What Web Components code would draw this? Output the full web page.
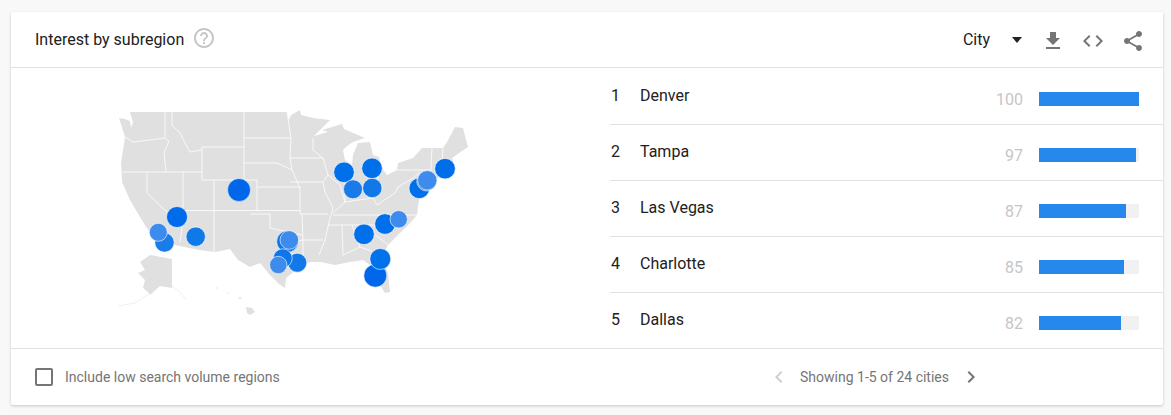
<!DOCTYPE html>
<html>
<head>
<meta charset="utf-8">
<title>Interest by subregion</title>
<style>
    html, body { margin: 0; height: 100%; background: #f8f8f8; overflow: hidden; }
    body { font-family: Roboto, "Liberation Sans", sans-serif; padding: 12px 8px 0 11px; box-sizing: border-box; }
</style>
</head>
<body>
<trends-card>
    <card-header slot="header" heading="Interest by subregion" resolution="City"></card-header>
    <geo-map slot="map"></geo-map>
    <rank-row slot="rows" rank="1" name="Denver" value="100"></rank-row>
    <rank-row slot="rows" rank="2" name="Tampa" value="97"></rank-row>
    <rank-row slot="rows" rank="3" name="Las Vegas" value="87"></rank-row>
    <rank-row slot="rows" rank="4" name="Charlotte" value="85"></rank-row>
    <rank-row slot="rows" rank="5" name="Dallas" value="82" last></rank-row>
    <card-footer slot="footer" label="Include low search volume regions" pages="Showing 1-5 of 24 cities"></card-footer>
</trends-card>

<script>
const ICONS = {
    help: "M11 18h2v-2h-2v2zm1-16C6.48 2 2 6.48 2 12s4.48 10 10 10 10-4.48 10-10S17.52 2 12 2zm0 18c-4.41 0-8-3.59-8-8s3.59-8 8-8 8 3.59 8 8-3.59 8-8 8zm0-14c-2.21 0-4 1.79-4 4h2c0-1.1.9-2 2-2s2 .9 2 2c0 2-3 1.75-3 5h2c0-2.25 3-2.5 3-5 0-2.21-1.79-4-4-4z",
    download: "M19 9h-4V3H9v6H5l7 7 7-7zM5 18v2h14v-2H5z",
    code: "M9.4 16.6L4.8 12l4.6-4.6L8 6l-6 6 6 6 1.4-1.4zm5.2 0l4.6-4.6-4.6-4.6L16 6l6 6-6 6-1.4-1.4z",
    share: "M18 16.08c-.76 0-1.44.3-1.96.77L8.91 12.7c.05-.23.09-.46.09-.7s-.04-.47-.09-.7l7.05-4.11c.54.5 1.25.81 2.04.81 1.66 0 3-1.34 3-3s-1.34-3-3-3-3 1.34-3 3c0 .24.04.47.09.7L8.04 9.81C7.5 9.31 6.79 9 6 9c-1.66 0-3 1.34-3 3s1.34 3 3 3c.79 0 1.5-.31 2.04-.81l7.12 4.16c-.05.21-.08.43-.08.65 0 1.61 1.31 2.92 2.92 2.92 1.61 0 2.92-1.31 2.92-2.92s-1.31-2.92-2.92-2.92z",
    prev: "M15.41 7.41L14 6l-6 6 6 6 1.41-1.41L10.83 12z",
    next: "M10 6L8.59 7.41 13.17 12l-4.58 4.59L10 18l6-6z"
};

class MdIcon extends HTMLElement {
    connectedCallback() {
        const color = this.getAttribute("color") || "#757575";
        this.attachShadow({ mode: "open" }).innerHTML = `
        <style>
            :host { display: block; width: 24px; height: 24px; flex: none; }
            svg { display: block; fill: ${color}; }
        </style>
        <svg width="24" height="24" viewBox="0 0 24 24"><path d="${ICONS[this.getAttribute("name")]}"></path></svg>`;
    }
}

class TrendsCard extends HTMLElement {
    constructor() {
        super();
        this.attachShadow({ mode: "open" }).innerHTML = `
        <style>
            :host {
                display: block;
                width: 1152px;
                background: #fff;
                border-radius: 2px;
                box-shadow: 0 1px 3px rgba(0, 0, 0, .2);
                color: #212121;
            }
            .body { display: flex; height: 280px; border-bottom: 1px solid #e0e0e0; }
            .map { width: 599px; flex: none; }
            .rows { flex: 1; padding-top: 1px; }
        </style>
        <slot name="header"></slot>
        <div class="body">
            <div class="map"><slot name="map"></slot></div>
            <div class="rows"><slot name="rows"></slot></div>
        </div>
        <slot name="footer"></slot>`;
    }
}

class CardHeader extends HTMLElement {
    connectedCallback() {
        this.attachShadow({ mode: "open" }).innerHTML = `
        <style>
            :host { display: flex; align-items: center; height: 55px; padding: 0 18px 0 24px; border-bottom: 1px solid #e0e0e0; }
            .title { font-size: 16px; margin-right: 8px; }
            .help { margin-top: -3px; }
            .pick { margin-left: auto; font-size: 16px; display: flex; align-items: center; }
            .arrow { width: 0; height: 0; border: 5px solid transparent; border-top: 6px solid #212121; border-bottom: 0; margin-left: 22px; margin-right: 19px; }
            .tools { display: flex; gap: 16px; position: relative; top: 1px; }
        </style>
        <span class="title">${this.getAttribute("heading")}</span>
        <md-icon class="help" name="help" color="#c6c6c6"></md-icon>
        <div class="pick">${this.getAttribute("resolution")}<span class="arrow"></span></div>
        <div class="tools">
            <md-icon name="download"></md-icon>
            <md-icon name="code"></md-icon>
            <md-icon name="share"></md-icon>
        </div>`;
    }
}

class GeoMap extends HTMLElement {
    constructor() {
        super();
        this.land = "M119 118L125 119 130 121 131 128 133 122 130 112H287L289 120 291 115 300 110 301 115 313 118 330 120 314 136 328 132 322 130 342 124 344 129 365 138 353 142 347 146 343 150 345 160 352 165 353 155 358 143 370 142 373 155 379 157 382 168 387 175 397 170 398 163 413 158 422 148 432 148 443 148 447 142 455 127 463 128 468 147 459 153 452 158 455 167 447 175 438 178 430 185 428 192 420 196 418 206 417 215 411 222 400 233 388 245 382 257 388 273 390 292 385 293 377 280 370 265 363 260 350 262 335 265 321 262 310 262 296 270 286 278 285 288 279 284 270 275 260 263 250 267 238 260 230 249 215 252 199 250 175 245 172 245 150 233 140 217 130 200 122 182 121 163 125 137Z";
        this.alaska = "M140 262L150 255 172 259V288L160 286 150 295 148 292 143 288 145 280 138 273 145 270Z";
        this.hawaii = "M246 307L252 308 255 312 250 315 247 313Z";
        this.lines = [
            "M165 112V138L169 141 164 153 166 172", "M125 137L133 142 165 138", "M122 172H202",
            "M147 172V193L167 212 176 218 182 228 180 242", "M183 172V211", "M183 210.500H300",
            "M214 180V252", "M202 147H244V180H202V147", "M244 180H257V210",
            "M172 112V125L180 133 185 143 190 152 202 150", "M244 112V147", "M244 138H291",
            "M244 163H277L292 170 300 188", "M257 187H300V214", "M287 112L291 138 290 158 292 170",
            "M250 214H270V228L303 235", "M290 158H323L313 150V138", "M323 158L328 175 323 182H290",
            "M323 182L325 192 333 208 330 218 325 240 319 255", "M300 214H328", "M302 214L303 240H323",
            "M328 175L340 185 345 202 333 213", "M345 170V202", "M345 202L373 198 377 205 395 193 398 187",
            "M352 190H376L378 176", "M333 215H417", "M328 225H375L388 213", "M342 225L343 255",
            "M352 225L360 247 343 255", "M360 247L388 257", "M363 225L388 245", "M398 187L413 178 420 172",
            "M397 170H430", "M432 148L430 185", "M443 148L441 172", "M303 240V262", "M280 244L303 240"
        ];
        // x, y, r, fill (page coordinates, drawn back to front)
        this.dots = [
            [239, 190, 11.500, "#0066ea"], [177, 217, 10.500, "#006cea"], [164.500, 242.500, 9.700, "#1a7ce8"],
            [158.300, 232.300, 9, "#3d8bec"], [195.700, 236.700, 9.700, "#1079e8"], [287.500, 241.500, 10.800, "#0d75e8"],
            [289.300, 240, 9.300, "#3d8bec"], [297.300, 262.700, 9.500, "#1279e8"],
            [282.700, 258.300, 9.500, "#0f75e8"], [278.300, 265, 8.700, "#3d8bec"], [364, 234.300, 10.300, "#0070ea"],
            [385, 224, 10.300, "#0070ea"], [398.700, 219.300, 8.700, "#3d8bec"], [375.300, 275.700, 11.500, "#0066ea"],
            [380.300, 259, 10.500, "#0072ea"], [344, 172.300, 10.300, "#0070ea"], [372, 168.300, 10.300, "#0070ea"],
            [353, 189.300, 9.500, "#1a7ae8"], [372.300, 188, 9.700, "#1278e8"], [419.300, 188.300, 10.300, "#0070ea"],
            [426.500, 181.300, 9.700, "#3d8bec"], [427.300, 180.300, 9.700, "#3d8bec"], [445, 168.700, 10.300, "#006eea"]
        ];
    }

    connectedCallback() {
        this.attachShadow({ mode: "open" }).innerHTML = `
        <style>
            :host { display: block; }
            svg { display: block; filter: blur(.35px); }
        </style>
        <svg width="599" height="280" viewBox="11 68 599 280">
            <path d="${this.land}" fill="#e0e0e0"></path>
            <path d="${this.alaska}" fill="#e0e0e0"></path>
            <path d="${this.hawaii}" fill="#e0e0e0"></path>
            <g fill="none" stroke="#f0f0f0" stroke-width="1">
                <path d="M150 293L135 303 118 306"></path>
                <path d="M172 286L180 292 186 300"></path>
            </g>
            <circle cx="217" cy="288" r="1" fill="#f0f0f0"></circle>
            <circle cx="228" cy="293" r="1" fill="#f0f0f0"></circle>
            <circle cx="240" cy="298" r="1.500" fill="#ececec"></circle>
            <g fill="none" stroke="#fff" stroke-opacity=".85" stroke-width=".9">
                ${this.lines.map(d => `<path d="${d}"></path>`).join("")}
            </g>
            <g stroke="#fff" stroke-opacity=".6" stroke-width="1">
                ${this.dots.map(([x, y, r, c]) => `<circle cx="${x}" cy="${y}" r="${r}" fill="${c}"></circle>`).join("")}
            </g>
        </svg>`;
    }
}

class RankRow extends HTMLElement {
    connectedCallback() {
        const value = this.getAttribute("value");
        this.attachShadow({ mode: "open" }).innerHTML = `
        <style>
            :host { display: flex; align-items: center; height: 55px; font-size: 16px; border-bottom: 1px solid #e0e0e0; }
            :host([last]) { border-bottom: 0; }
            .rank { width: 30px; padding-left: 1px; box-sizing: border-box; position: relative; top: -1px; }
            .name { flex: 1; position: relative; top: -1px; }
            .value { color: #c6c6c6; width: 40px; text-align: right; margin-right: 16px; position: relative; top: 3px; }
            .track { width: 100px; height: 14px; background: #f1f1f1; margin-right: 24px; position: relative; top: 2px; }
            .fill { height: 100%; background: #2687ed; }
        </style>
        <span class="rank">${this.getAttribute("rank")}</span>
        <span class="name">${this.getAttribute("name")}</span>
        <span class="value">${value}</span>
        <div class="track"><div class="fill" style="width: ${value}%"></div></div>`;
    }
}

class CardFooter extends HTMLElement {
    connectedCallback() {
        this.attachShadow({ mode: "open" }).innerHTML = `
        <style>
            :host { display: flex; align-items: center; height: 56px; padding-left: 24px; font-size: 14px; color: #757575; }
            .box { width: 14px; height: 14px; border: 2px solid #757575; border-radius: 2px; margin-right: 12px; flex: none; }
            .pages { margin-left: auto; margin-right: 180px; display: flex; align-items: center; gap: 9px; }
            .count { margin-right: 1px; }
        </style>
        <span class="box"></span>
        <span class="label">${this.getAttribute("label")}</span>
        <div class="pages">
            <md-icon name="prev" color="#d0d0d0"></md-icon>
            <span class="count">${this.getAttribute("pages")}</span>
            <md-icon name="next"></md-icon>
        </div>`;
    }
}

customElements.define("md-icon", MdIcon);
customElements.define("trends-card", TrendsCard);
customElements.define("card-header", CardHeader);
customElements.define("geo-map", GeoMap);
customElements.define("rank-row", RankRow);
customElements.define("card-footer", CardFooter);
</script>
</body>
</html>
